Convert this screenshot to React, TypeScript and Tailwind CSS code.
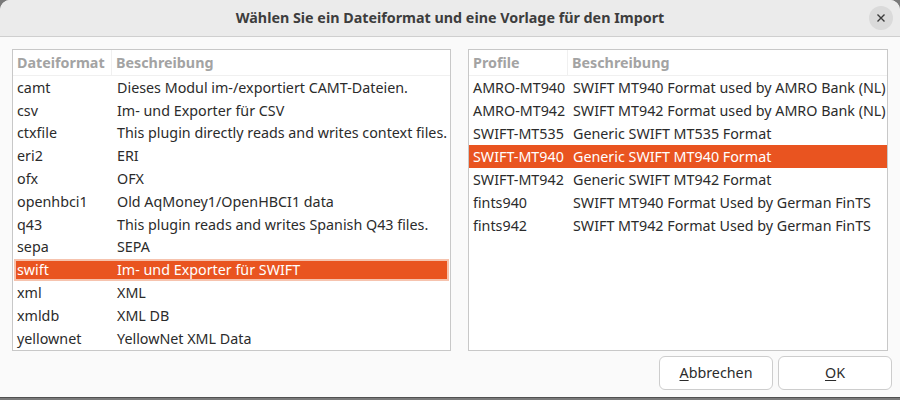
const formats: [string, string][] = [
  ['camt', 'Dieses Modul im-/exportiert CAMT-Dateien.'],
  ['csv', 'Im- und Exporter für CSV'],
  ['ctxfile', 'This plugin directly reads and writes context files.'],
  ['eri2', 'ERI'],
  ['ofx', 'OFX'],
  ['openhbci1', 'Old AqMoney1/OpenHBCI1 data'],
  ['q43', 'This plugin reads and writes Spanish Q43 files.'],
  ['sepa', 'SEPA'],
  ['swift', 'Im- und Exporter für SWIFT'],
  ['xml', 'XML'],
  ['xmldb', 'XML DB'],
  ['yellownet', 'YellowNet XML Data'],
]

const profiles: [string, string][] = [
  ['AMRO-MT940', 'SWIFT MT940 Format used by AMRO Bank (NL)'],
  ['AMRO-MT942', 'SWIFT MT942 Format used by AMRO Bank (NL)'],
  ['SWIFT-MT535', 'Generic SWIFT MT535 Format'],
  ['SWIFT-MT940', 'Generic SWIFT MT940 Format'],
  ['SWIFT-MT942', 'Generic SWIFT MT942 Format'],
  ['fints940', 'SWIFT MT940 Format Used by German FinTS'],
  ['fints942', 'SWIFT MT942 Format Used by German FinTS'],
]

interface ListProps {
  first: string
  rows: [string, string][]
  selected: number
  focused?: boolean
  className: string
}

function List({ first, rows, selected, focused, className }: ListProps) {
  return (
    <div className={`flex flex-col overflow-hidden border border-[#c8c8c8] bg-white ${className}`}>
      <div className="flex h-[26px] shrink-0 items-center border-b border-[#f0f0f0] font-bold text-[#a3a3a3]">
        <div className="w-[99px] border-r border-[#f0f0f0] pl-[4px] leading-[25px]">{first}</div>
        <div className="pl-[4px]">Beschreibung</div>
      </div>
      {rows.map(([a, b], i) => {
        const sel = i === selected
        return (
          <div
            key={a}
            className={
              sel
                ? focused
                  ? 'mx-[1px] flex h-[23px] items-center bg-[#e95420] text-white ring-2 ring-inset ring-[#f6c3ae]'
                  : 'flex h-[23px] items-center bg-[#e95420] text-white'
                : 'flex h-[23px] items-center text-[#2b2b2b]'
            }
          >
            <div className={sel && focused ? 'w-[98px] pl-[3px]' : 'w-[99px] pl-[4px]'}>{a}</div>
            <div className="whitespace-nowrap pl-[5px]">{b}</div>
          </div>
        )
      })}
    </div>
  )
}

export default function App() {
  return (
    <div
      className="h-[400px] w-[900px] bg-[#7a7a7a] text-[14.3px]"
      style={{ fontFamily: '"Noto Sans", "Open Sans", sans-serif' }}
    >
      <div className="flex h-[398px] flex-col overflow-hidden rounded-t-[10px] border-b border-[#505050] bg-[#fafafa]">
        <div className="relative flex h-[37px] shrink-0 items-center justify-center border-b border-[#cfcfcf] bg-[#ebebeb]">
          <span className="font-bold text-[#3d3d3d]">
            Wählen Sie ein Dateiformat und eine Vorlage für den Import
          </span>
          <div className="absolute right-[7px] top-[6px] flex h-[24px] w-[24px] items-center justify-center rounded-full bg-[#dadada]">
            <svg width="10" height="10" viewBox="0 0 10 10">
              <path d="M1.5 1.5 8.5 8.5M8.5 1.5 1.5 8.5" stroke="#3a3a3a" strokeWidth="1.4" />
            </svg>
          </div>
        </div>
        <div className="flex gap-[17px] pl-[12px] pt-[12px]">
          <List first="Dateiformat" rows={formats} selected={8} focused className="h-[302px] w-[439px]" />
          <List first="Profile" rows={profiles} selected={3} className="h-[302px] w-[420px]" />
        </div>
        <div className="flex justify-end gap-[5px] pr-[8px] pt-[5px]">
          <button className="h-[34px] w-[114px] rounded-[6px] border border-[#cdcdcd] bg-white text-[#2b2b2b]">
            <span className="underline underline-offset-2">A</span>bbrechen
          </button>
          <button className="h-[34px] w-[114px] rounded-[6px] border border-[#cdcdcd] bg-white text-[#2b2b2b]">
            <span className="underline underline-offset-2">O</span>K
          </button>
        </div>
      </div>
    </div>
  )
}
